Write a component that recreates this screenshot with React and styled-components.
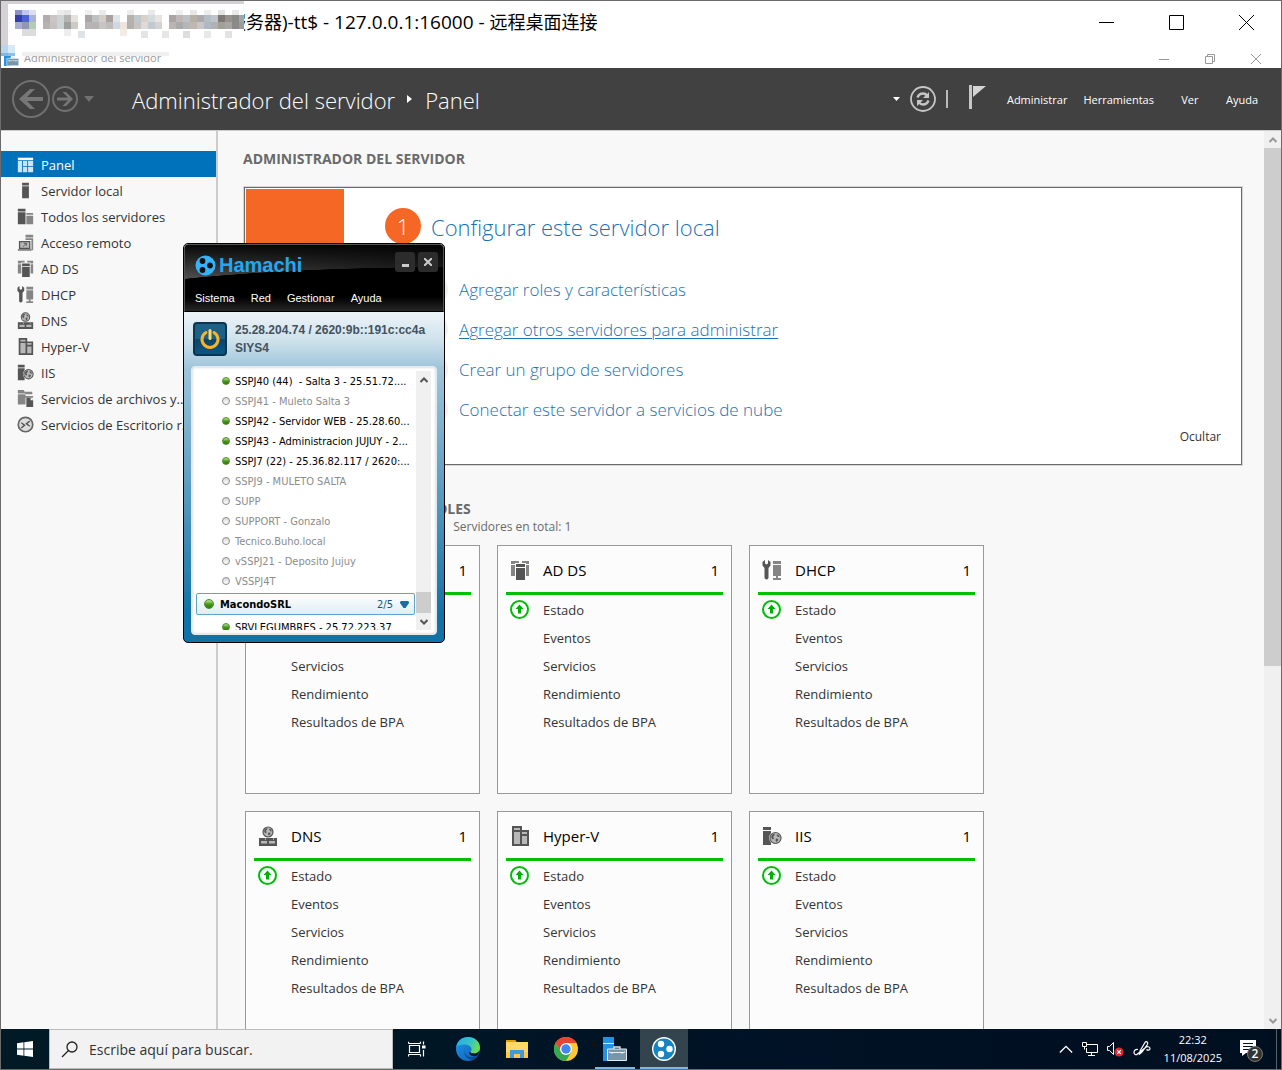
import React from 'react';
import styled, { createGlobalStyle, css } from 'styled-components';

const GlobalStyle = createGlobalStyle`
  *, *::before, *::after { box-sizing: border-box; }
  body { margin: 0; font-family: 'Open Sans', 'Noto Sans', sans-serif; font-size: 13px; color: #333; }
  button, input { font: inherit; color: inherit; margin: 0; }
  button { border: 0; background: none; padding: 0; }
  h1, h2, ul, p { margin: 0; padding: 0; font-weight: inherit; font-size: inherit; }
  li { list-style: none; }
  a { color: inherit; text-decoration: none; }
  svg { display: block; flex: none; }
`;

/* ---------- window frame ---------- */

const Desktop = styled.div`
  position: relative;
  display: flex;
  flex-direction: column;
  height: 100vh;
  border: 1px solid #6b6b6b;
  background: #fff;
  overflow: hidden;
`;

const TitleBar = styled.header`
  display: flex;
  align-items: center;
  flex: none;
  height: 44px;
  padding: 0 27px 2px 227px;
  color: #000;
`;

const WindowTitle = styled.h1`
  flex: 1;
  font-family: 'Open Sans', 'Noto Sans CJK SC', sans-serif;
  font-size: 18px;
  line-height: 24px;
  white-space: nowrap;
`;

const Address = styled.span`
  font-size: 19px;
`;

const Controls = styled.div`
  display: flex;
  gap: ${(p) => p.$gap}px;
`;

const SubTitleBar = styled.div`
  display: flex;
  justify-content: space-between;
  flex: none;
  height: 23px;
  padding: 5px 20px 0 3px;
  color: #999;
  font-size: 11px;
  line-height: 16px;
`;

const SubTitle = styled.div`
  display: flex;
  align-items: center;
  gap: 5px;
  height: 16px;
`;

const Veil = styled.svg`
  position: absolute;
  left: 0;
  top: 0;
`;

/* ---------- server manager header ---------- */

const Banner = styled.div`
  display: flex;
  align-items: center;
  flex: none;
  height: 63px;
  padding: 0 23px 0 11px;
  background: #414141;
  border-bottom: 1px solid #ccc;
  color: #fff;
`;

const Breadcrumb = styled.div`
  display: flex;
  align-items: center;
  gap: 12px;
  flex: 1;
  margin-left: 37px;
  padding-top: 2px;
  font-size: 22px;
  font-weight: 300;
  line-height: 32px;
  white-space: nowrap;
`;

const NavButtons = styled.div`
  display: flex;
  align-items: center;
  gap: 2px;
`;

const Tools = styled.div`
  display: flex;
  align-items: center;
  gap: 10px;
  margin-right: 21px;
`;

const Divider = styled.span`
  width: 2px;
  height: 18px;
  margin-right: 10px;
  background: #bbb;
`;

const MenuBar = styled.nav`
  display: flex;
  gap: 16px;
  padding-top: 2px;
  font-size: 11px;
  line-height: 20px;
`;

const MenuButton = styled.button`
  min-width: ${(p) => (p.$wide ? 40 : 0)}px;
`;

/* ---------- body ---------- */

const Body = styled.div`
  display: flex;
  flex: 1;
  min-height: 0;
  background: #f8f8f8;
`;

const Sidebar = styled.nav`
  flex: none;
  width: 217px;
  padding-top: 20px;
  border-right: 2px solid #ccc;
`;

const SideItem = styled.a`
  display: flex;
  align-items: center;
  gap: 7px;
  height: 26px;
  padding-left: 16px;
  overflow: hidden;
  font-size: 13px;
  white-space: nowrap;
  color: ${(p) => (p.$active ? '#fff' : '#333')};
  background: ${(p) => (p.$active ? '#0072bc' : 'transparent')};
`;

const SideLabel = styled.span`
  padding-top: 2px;
`;

const Main = styled.main`
  flex: 1;
  min-width: 0;
  padding: 18px 22px 0 25px;
  overflow: hidden;
`;

const Heading = styled.h2`
  font-size: 14px;
  font-weight: 700;
  line-height: 20px;
  color: #6a6a6a;
`;

const Welcome = styled.section`
  display: flex;
  height: 278px;
  margin: 18px 0 34px 1px;
  padding: 1px;
  background: #fff;
  border: 1px solid #6a6a6a;
  box-shadow: 0 0 0 1px #d6d6d6;
`;

const OrangeTile = styled.div`
  flex: none;
  width: 98px;
  height: 132px;
  background: #f56724;
`;

const Steps = styled.div`
  flex: 1;
  padding: 19px 19px 0 41px;
`;

const Step = styled.a`
  display: flex;
  align-items: center;
  gap: ${(p) => (p.$main ? 10 : 11)}px;
  height: ${(p) => (p.$main ? 36 : 40)}px;
  margin: ${(p) => (p.$main ? '0 0 25px' : '0 0 0 30px')};
  color: #1a72b5;
  font-size: ${(p) => (p.$main ? 22 : 17)}px;
  font-weight: 300;
  text-decoration: ${(p) => (p.$underline ? 'underline' : 'none')};
  text-underline-offset: 2px;
  text-decoration-thickness: 1px;
  white-space: nowrap;
`;

const StepText = styled.span`
  padding-top: ${(p) => (p.$main ? 2 : 0)}px;
`;

const StepNumber = styled.span`
  display: flex;
  align-items: center;
  justify-content: center;
  width: ${(p) => (p.$main ? 36 : 33)}px;
  height: ${(p) => (p.$main ? 36 : 33)}px;
  border-radius: 50%;
  color: ${(p) => (p.$main ? '#fff' : '#777')};
  background: ${(p) => (p.$main ? '#f56724' : '#f0f0f0')};
`;

const HideButton = styled.button`
  display: block;
  margin: -2px 0 0 auto;
  font-size: 12px;
  line-height: 20px;
`;

const Summary = styled.p`
  display: flex;
  gap: 17px;
  font-size: 12px;
  line-height: 16px;
  color: #6a6a6a;
  margin-bottom: 10px;
`;

const Tiles = styled.div`
  display: grid;
  grid-template-columns: repeat(3, 235px);
  gap: 17px;
  padding-left: 2px;
`;

const Tile = styled.section`
  height: 249px;
  padding: 0 8px;
  background: #fcfcfc;
  border: 1px solid #999;
`;

const TileHead = styled.header`
  display: flex;
  align-items: center;
  height: 49px;
  padding: 2px 4px 0 4px;
  border-bottom: 3px solid #00c000;
  font-size: 15px;
  line-height: 20px;
  color: #000;
`;

const TileName = styled.h2`
  flex: 1;
  margin-left: 13px;
`;

const TileRow = styled.li`
  display: flex;
  align-items: center;
  gap: 13px;
  height: 28px;
  padding-left: ${(p) => (p.$indent ? 37 : 4)}px;
`;

const TileRowText = styled.span`
  padding-top: 2px;
`;

const ScrollBar = styled.div`
  display: flex;
  flex-direction: column;
  flex: none;
  width: ${(p) => p.$w}px;
  background: #f0f0f0;
`;

const ScrollButton = styled.button`
  display: flex;
  align-items: center;
  justify-content: center;
  height: 17px;
  color: ${(p) => p.$tone};
`;

const Track = styled.div`
  display: flex;
  flex-direction: column;
  flex: 1;
  justify-content: ${(p) => (p.$end ? 'flex-end' : 'flex-start')};
`;

const Thumb = styled.div`
  height: ${(p) => p.$size};
  background: #cdcdcd;
`;

/* ---------- Hamachi window ---------- */

const Hamachi = styled.section`
  position: absolute;
  left: 182px;
  top: 242px;
  display: flex;
  flex-direction: column;
  width: 262px;
  height: 400px;
  overflow: hidden;
  border: 1px solid #000;
  border-radius: 5px;
  background: linear-gradient(#edf4f8 68px, #cfe2ec 96px, #9fc5db 124px, #1272a6 370px);
`;

const HamachiHead = styled.header`
  display: flex;
  flex-direction: column;
  justify-content: space-between;
  flex: none;
  height: 68px;
  padding: 3px 5px 4px 10px;
  border: 1px solid #555;
  border-bottom-color: #000;
  border-radius: 4px 4px 0 0;
  background: linear-gradient(transparent 52px, #2c2c2c 68px),
    radial-gradient(ellipse 400px 48px at 260px 70px, #000 99%, transparent 100%),
    linear-gradient(90deg, transparent, rgba(0, 0, 0, 0.6)),
    linear-gradient(#080808, #5c5c5c 40px);
`;

const BrandRow = styled.div`
  display: flex;
  align-items: center;
  gap: 3px;
`;

const Brand = styled.h2`
  display: flex;
  align-items: center;
  gap: 3px;
  flex: 1;
  padding-top: 6px;
  font-family: 'Liberation Sans', Arial, sans-serif;
  font-size: 20px;
  font-weight: 700;
  line-height: 22px;
  color: #22a7f0;
`;

const DarkButton = styled.button`
  display: flex;
  align-items: center;
  justify-content: center;
  width: 20px;
  height: 20px;
  border-radius: 3px;
  background: #2c2c2c;
  color: #ccc;
`;

const HamachiMenu = styled.nav`
  display: flex;
  gap: 16px;
  font-family: 'Liberation Sans', Arial, sans-serif;
  font-size: 11px;
  line-height: 18px;
  color: #fff;
`;

const Identity = styled.div`
  display: flex;
  align-items: center;
  gap: 8px;
  flex: none;
  height: 54px;
  padding-left: 9px;
  font-family: 'Liberation Sans', Arial, sans-serif;
  font-size: 12px;
  font-weight: 700;
  line-height: 18px;
  color: #44525e;
`;

const PowerButton = styled.button`
  display: flex;
  align-items: center;
  justify-content: center;
  width: 34px;
  height: 34px;
  border: 2px solid #0b3550;
  border-radius: 4px;
  background: linear-gradient(#1c6088 50%, #0b4468 50%, #0d5580);
`;

const Panel = styled.div`
  display: flex;
  flex: 1;
  min-height: 0;
  margin: 0 7px 7px;
  padding: 4px 5px 4px 4px;
  border: 1px solid #e2eaf0;
  border-radius: 4px;
  background: #fff;
  box-shadow: inset 0 0 3px #b8c4cc;
`;

const PeerList = styled.ul`
  flex: 1;
  min-width: 0;
  overflow: hidden;
  padding-right: 1px;
  font-family: 'DejaVu Sans Condensed', 'DejaVu Sans', sans-serif;
  font-stretch: condensed;
  font-size: 11px;
`;

const Peer = styled.li`
  display: flex;
  align-items: center;
  gap: 5px;
  height: 20px;
  padding-left: 26px;
  color: ${(p) => (p.$on ? '#000' : '#8c8c8c')};
`;

const PeerName = styled.span`
  white-space: pre;
`;

const Dot = styled.span`
  flex: none;
  width: ${(p) => p.$d}px;
  height: ${(p) => p.$d}px;
  border-radius: 50%;
  border: 1px solid #8a8a8a;
  background: linear-gradient(#d8d8d8, #fff);
  ${(p) =>
    p.$on &&
    css`
      border-color: #4b8a2a;
      background: linear-gradient(#a5d67d 15%, #4a9a1c 50%, #2f7a0c);
    `}
`;

const Network = styled.li`
  display: flex;
  align-items: center;
  height: 22px;
  margin: 2px 0;
  padding: 0 5px 0 7px;
  border: 1px solid #5fa3c8;
  border-radius: 2px;
  background: linear-gradient(#fff, #e0edf5);
  color: #14567d;
`;

const NetworkName = styled.strong`
  flex: 1;
  margin-left: 6px;
  color: #000;
`;

const NetworkCount = styled.span`
  margin-right: 7px;
`;

/* ---------- taskbar ---------- */

const Taskbar = styled.footer`
  display: flex;
  flex: none;
  height: 40px;
  background: linear-gradient(90deg, #001b25, #001225 60%, #000f20);
  color: #fff;
`;

const TaskButton = styled.button`
  display: flex;
  align-items: center;
  justify-content: center;
  width: 48px;
  height: 40px;
  background: ${(p) => (p.$active ? '#33444f' : 'transparent')};
  box-shadow: ${(p) => (p.$active ? 'inset 0 -2px #76b9ed' : 'none')};
`;

const OpenMark = styled.span`
  display: flex;
  align-items: center;
  justify-content: center;
  width: 40px;
  height: 40px;
  box-shadow: inset 0 -2px #76b9ed;
`;

const Pinned = styled.div`
  display: flex;
  gap: 1px;
  flex: 1;
  padding-left: 3px;
`;

const SearchBox = styled.label`
  display: flex;
  align-items: center;
  gap: 11px;
  width: 344px;
  padding-left: 11px;
  background: #f2f2f2;
  border: 1px solid #bbb;
  color: #222;
`;

const SearchInput = styled.input`
  flex: 1;
  min-width: 0;
  padding: 0;
  border: 0;
  outline: 0;
  background: transparent;
  font-size: 14px;
  &::placeholder { color: #333; opacity: 1; }
`;

const Tray = styled.div`
  display: flex;
  align-items: center;
  gap: 9px;
  padding-right: 4px;
`;

const Clock = styled.time`
  margin: 0 8px 0 4px;
  font-size: 11px;
  line-height: 18px;
  text-align: center;
`;

const ShowDesktop = styled.button`
  width: 1px;
  height: 40px;
  margin-left: 3px;
  background: #56616b;
`;

/* ---------- icons ---------- */

const D = '#555';
const M = '#858585';
const L = '#b8b8b8';

const Globe = ({ x, y, r }) => (
  <g>
    <circle cx={x} cy={y} r={r} fill={L} stroke={D} strokeWidth="1.2" />
    <path
      transform={`translate(${x} ${y}) scale(${r / 5})`}
      d="M-4-1L-2.500-3.500L-.5-4L-1-2.200L-2.200-1.200L-1.400 0L-2 1.400L-3 1ZM1-3.400L3-2.600L3.800-.4L2.600-.8L1.400-1.600ZM.4.400L2.600.8L2 2.800L.6 3.600L0 2Z"
      fill={D}
    />
  </g>
);

const shapes = {
  panel: (
    <>
      <path d="M1 2h18v3H1z" fill="#fff" />
      <path d="M1 6h5v13H1zM7 6h5v6H7zM13 6h6v6h-6zM7 13h5v6H7zM13 13h6v6h-6z" fill="#cde4f3" />
    </>
  ),
  local: <path d="M6 1h8v3H6zM6 5h8v14H6z" fill={D} />,
  all: (
    <>
      <path d="M1 1h9v3H1zM1 5h9v14H1z" fill={D} />
      <path d="M11 6h8v2h-8zM11 9h8v10h-8z" fill={M} />
    </>
  ),
  remote: (
    <>
      <path d="M10 1h9v3h-9zM10 5h9v14h-2V7h-7z" fill={M} />
      <path d="M3 9h12v8H3z" fill={L} stroke={D} strokeWidth="1.5" />
      <path d="M1 18h16v1.500H1z" fill={D} />
      <path d="M7 15l4-4M8 11h3v3" fill="none" stroke={D} />
    </>
  ),
  adds: (
    <>
      <path d="M1 1h8v2H5v1H1zM1 5h4v11H1zM12 1h7v3h-3V3h-4zM16 5h3v11h-3z" fill={M} />
      <path d="M6 4h9v3H6zM6 8h9v12H6z" fill={D} />
    </>
  ),
  dhcp: (
    <>
      <path
        d="M3 0v3.500l1.500 1 1.500-1V0l2.500 2v3.500L6.500 8v10q-2 3-4 0V8L.5 5.500V2z"
        fill={D}
      />
      <path d="M11 1h8v3h-8zM11 5h8v11h-8zM14 16h2v2h3v2h-8v-2h3z" fill={M} />
    </>
  ),
  dns: (
    <>
      <Globe x={10} y={6} r={5} />
      <path d="M1 12h18v8H1z" fill={D} />
      <path d="M3 15h6v2.500H3zM11 15h6v2.500h-6z" fill={L} />
      <path d="M7 12.500h1v1H7zM15 12.500h1v1h-1z" fill="#fff" />
    </>
  ),
  hyperv: (
    <>
      <path d="M2 0h10v4h7v16H2z" fill={D} />
      <path d="M4 2h6v2H4zM4 6h6v12H4zM12 6h5v2h-5zM12 10h5v8h-5z" fill={L} />
    </>
  ),
  iis: (
    <>
      <path d="M1 1h8v3H1zM1 5h8v14H1z" fill={D} />
      <circle cx="13.500" cy="12" r="6.500" fill="#f8f8f8" />
      <Globe x={13.5} y={12} r={5.5} />
    </>
  ),
  files: (
    <>
      <path d="M1 0h7l1 2h9v3h-8v-1H1zM1 5h9v2h9v2h-9v8H1z" fill={M} />
      <path d="M11 9h5l3 3v8h-8z" fill={D} />
      <path d="M16 9v3h3z" fill="#fff" />
    </>
  ),
  rds: (
    <>
      <circle cx="10" cy="10" r="8.500" fill="#ddd" stroke="#666" strokeWidth="2" />
      <path d="M5 8l4 3-4 3M15 6l-4 3 4 3" fill="none" stroke={D} strokeWidth="1.600" />
    </>
  ),
};

const RoleIcon = ({ name, size }) => (
  <svg width={size} height={size} viewBox="0 0 20 20" aria-hidden="true">
    {shapes[name]}
  </svg>
);

const Chevron = ({ down, w = 8, stroke = 2 }) => (
  <svg width={w} height={w} viewBox="0 0 8 8" aria-hidden="true">
    <path
      d={down ? 'M0.500 2l3.500 3.500L7.500 2' : 'M0.500 6L4 2.500L7.500 6'}
      fill="none"
      stroke="currentColor"
      strokeWidth={stroke}
    />
  </svg>
);

const StatusUp = () => (
  <svg width="20" height="20" viewBox="0 0 20 20" aria-hidden="true">
    <circle cx="9.500" cy="10.500" r="8.500" fill="#fff" stroke="#00bd0a" strokeWidth="2" />
    <path d="M9.500 5.500l4 4.500h-2.500v4.500h-3V10H5.500z" fill="#00b000" />
  </svg>
);

const Minimise = ({ size }) => (
  <svg width={size} height={size} aria-hidden="true">
    <path d={`M0 ${Math.floor(size / 2) + 0.5}h${size}`} stroke="currentColor" />
  </svg>
);

const Maximise = () => (
  <svg width="15" height="15" aria-hidden="true">
    <path d="M.5.5h14v14H.5z" fill="none" stroke="currentColor" />
  </svg>
);

const Restore = () => (
  <svg width="10" height="10" aria-hidden="true">
    <path d="M.5 2.500h7v7h-7zM2.500 2.500v-2h7v7h-2" fill="none" stroke="currentColor" />
  </svg>
);

const Close = ({ size, w = 1 }) => (
  <svg width={size} height={size} aria-hidden="true">
    <path d={`M0 0L${size} ${size}M${size} 0L0 ${size}`} stroke="currentColor" strokeWidth={w} />
  </svg>
);

const ServerCase = ({ size }) => (
  <svg width={size} height={size} viewBox="0 0 24 24" aria-hidden="true">
    <path d="M0 0h11v24H0z" fill="#2492e0" />
    <path d="M0 6.500h11" stroke="#cfe8fa" />
    <path d="M11 12v-2h6v2" fill="none" stroke="#dfe8ed" strokeWidth="1.300" />
    <path d="M4.500 12h19v11.500h-19z" fill="#7896a8" stroke="#e3edf2" />
    <path d="M6.500 14.500v1h15v-1M9 15v2M19 15v2" fill="none" stroke="#e3edf2" />
  </svg>
);

const Back = () => (
  <svg width="38" height="38" viewBox="0 0 38 38" aria-hidden="true">
    <circle cx="19" cy="19" r="18" fill="none" stroke="#707070" strokeWidth="2" />
    <path d="M7 19L18 9h5l-8 8h16v4H15l8 8h-5z" fill="#777" />
  </svg>
);

const Forward = () => (
  <svg width="26" height="26" viewBox="0 0 26 26" aria-hidden="true">
    <circle cx="13" cy="13" r="12" fill="none" stroke="#707070" strokeWidth="2" />
    <path d="M21 13l-7 7h-3.500l5.500-5.500H5v-3h11L10.500 6H14z" fill="#777" />
  </svg>
);

const Caret = ({ w, h, color }) => (
  <svg width={w} height={h} viewBox="0 0 10 6" preserveAspectRatio="none" aria-hidden="true">
    <path d="M0 0h10L5 6z" fill={color} />
  </svg>
);

const NetworkCaret = () => (
  <svg width="9" height="7" viewBox="0 0 9 7" aria-hidden="true">
    <path d="M1 0h7l1 1v1L5.500 7h-2L0 2V1z" fill="#1a6d9e" />
  </svg>
);

const Refresh = () => (
  <svg width="26" height="26" viewBox="0 0 26 26" aria-hidden="true">
    <circle cx="13" cy="13" r="12" fill="none" stroke="#c6c6c6" strokeWidth="1.800" />
    <path d="M7.500 11.500q1.500-4 5.500-4 2.500 0 4 2M18.500 14.500q-1.500 4-5.500 4-2.500 0-4-2" fill="none" stroke="#c6c6c6" strokeWidth="2.400" />
    <path d="M19 6v6h-6zM7 20v-6h6z" fill="#c6c6c6" />
  </svg>
);

const Flag = () => (
  <svg width="18" height="28" viewBox="0 0 18 28" aria-hidden="true">
    <path d="M1 0h3v24H1z" fill="#c6c6c6" />
    <path d="M5 1h13L5 12z" fill="#d4d4d4" />
  </svg>
);

const HamachiMark = () => (
  <svg width="21" height="21" viewBox="0 0 21 21" aria-hidden="true">
    <circle cx="10.500" cy="10.500" r="10" fill="#35b3fa" />
    <g fill="#111">
      <circle cx="7.500" cy="6" r="2.900" />
      <circle cx="15" cy="10.500" r="2.900" />
      <circle cx="7.500" cy="15" r="2.900" />
    </g>
  </svg>
);

const Power = () => (
  <svg width="22" height="22" viewBox="0 0 22 22" aria-hidden="true">
    <path d="M7 4.500a8 8 0 1 0 8 0" fill="none" stroke="#f5b42a" strokeWidth="3" strokeLinecap="round" />
    <path d="M11 2.500v8" stroke="#ffd765" strokeWidth="3" strokeLinecap="round" />
  </svg>
);

const WindowsLogo = () => (
  <svg width="16" height="16" viewBox="0 0 16 16" aria-hidden="true">
    <path d="M0 2.200L6.500 1.300V7.600H0zM7.300 1.200L16 0V7.600H7.300zM0 8.400H6.500V14.700L0 13.800zM7.300 8.400H16V16L7.300 14.800z" fill="#fff" />
  </svg>
);

const Magnifier = () => (
  <svg width="17" height="17" viewBox="0 0 17 17" aria-hidden="true">
    <circle cx="11" cy="6" r="5" fill="none" stroke="#222" strokeWidth="1.300" />
    <path d="M7.500 9.500L1 16" stroke="#222" strokeWidth="1.300" />
  </svg>
);

const TaskView = () => (
  <svg width="18" height="16" viewBox="0 0 18 16" aria-hidden="true">
    <path d="M1.500 4.500h10v7h-10zM.5 2.500V.8M.5 2.500h12M12.500 2.500V.8M.5 13.500h12M.5 13.500v2M12.500 13.500v2M15.500.5v3M15.500 9v6.500" fill="none" stroke="#fff" strokeWidth="1.200" />
    <path d="M14 4.500h3.500v3H14z" fill="#fff" />
  </svg>
);

const Edge = () => (
  <svg width="24" height="24" viewBox="0 0 24 24" aria-hidden="true">
    <defs>
      <linearGradient id="edgeTop" x1="0" y1="0" x2="1" y2="0.400">
        <stop offset="0" stopColor="#28a8ea" />
        <stop offset="0.600" stopColor="#35c1c8" />
        <stop offset="1" stopColor="#66dc5a" />
      </linearGradient>
      <linearGradient id="edgeLow" x1="0" y1="0" x2="1" y2="1">
        <stop offset="0" stopColor="#2196e8" />
        <stop offset="1" stopColor="#0b5cb8" />
      </linearGradient>
    </defs>
    <circle cx="12" cy="12" r="12" fill="url(#edgeLow)" />
    <path d="M0.300 10C1 4 6 0 12 0c7 0 12 5 12 10.500 0 4-3 6-6 6-2.500 0-4-1-3.500-2 2-2 1-5.500-3-6.500-5-1-9 0-11.200 2z" fill="url(#edgeTop)" />
    <path d="M9 10c-2 4 0 9 5 10 3 .5 6-.5 8-2-1 2-2.500 3.500-4.500 4.800C11 23 6 17 9 10z" fill="#114a8b" />
    <path d="M14.500 14.500c-.5 1 1 2 3.500 2 2 0 4-.8 5.400-2.800-.2 1.600-.7 3-1.400 4.300-2 1.500-5 1.500-7 .5-2-1.200-2.300-3.500-.5-4z" fill="#001a26" />
  </svg>
);

const Explorer = () => (
  <svg width="22" height="18" viewBox="0 0 22 18" aria-hidden="true">
    <path d="M0 0h9l1.500 2H22v16H0z" fill="#ffd869" />
    <path d="M0 0h9l1.500 2H0z" fill="#dfa000" />
    <path d="M0 12h22v6H0z" fill="#fbc94c" />
    <path d="M4 18v-8h14v8h-4v-4H8v4z" fill="#3c9be0" />
  </svg>
);

const Chrome = () => (
  <svg width="24" height="24" viewBox="0 0 24 24" aria-hidden="true">
    <circle cx="12" cy="12" r="12" fill="#fcc934" />
    <path d="M1.600 6A12 12 0 0 1 22.400 6H12L6.800 15z" fill="#ea4335" />
    <path d="M1.600 6A12 12 0 0 0 12 24L17.200 15H6.800z" fill="#34a853" />
    <circle cx="12" cy="12" r="6" fill="#fff" />
    <circle cx="12" cy="12" r="4.700" fill="#4285f4" />
  </svg>
);

const HamachiTask = () => (
  <svg width="24" height="24" viewBox="0 0 24 24" aria-hidden="true">
    <circle cx="12" cy="12" r="11.300" fill="#1583c4" stroke="#fff" strokeWidth="1.400" />
    <g fill="#fff">
      <circle cx="9" cy="7" r="3.200" />
      <circle cx="17.500" cy="12" r="3.200" />
      <circle cx="9" cy="17" r="3.200" />
    </g>
  </svg>
);

const NetworkTray = () => (
  <svg width="16" height="15" viewBox="0 0 16 15" fill="none" stroke="#fff" aria-hidden="true">
    <path d="M5 2.500h10.500v8H4.500V6M9.500 10.500v3M6 13.500h7M.5.500h4v4h-4zM2.500 4.500v3" />
  </svg>
);

const SoundTray = () => (
  <svg width="17" height="16" viewBox="0 0 17 16" aria-hidden="true">
    <path d="M.5 5.500h2l4-4v12l-4-4h-2z" fill="none" stroke="#fff" />
    <circle cx="12" cy="11" r="4.500" fill="#e0252b" />
    <path d="M10.200 9.200l3.600 3.600M13.800 9.200l-3.600 3.600" stroke="#fff" strokeWidth="1.200" />
  </svg>
);

const PenTray = () => (
  <svg width="18" height="18" viewBox="0 0 18 18" fill="none" stroke="#fff" strokeWidth="1.200" aria-hidden="true">
    <path d="M6.500 14L7 11L12 2.500q1-1.500 2.200-.5 1 1 .2 2.500L9 12zM5 9.500c-2.500-.5-4 1-4 3s2 3 3.500 1.500L12 8c2-2 5-1.500 5 .5s-2.500 2-3.500 1" />
  </svg>
);

const Notifications = () => (
  <svg width="25" height="25" viewBox="0 0 25 25" aria-hidden="true">
    <path d="M1 3h16v13H7l-4 3v-3H1z" fill="#fff" />
    <path d="M4 6.500h10M4 9.500h10M4 12.500h6" stroke="#001225" />
    <circle cx="16" cy="17" r="7.500" fill="#333" stroke="#777" />
    <text x="16" y="21" fill="#fff" fontSize="12" fontWeight="600" textAnchor="middle">2</text>
  </svg>
);

/* ---------- data ---------- */

const mosaic = [
  [15, 10, '#8c90ca'], [22, 10, '#c0c6f0'], [29, 10, '#dcdcf4'], [15, 15, '#343cae'], [22, 15, '#4c62da'], [29, 15, '#aab0de'],
  [15, 22, '#aaaad6'], [22, 22, '#9494b4'], [29, 22, '#b4ccb2'], [22, 29, '#dcdcda'], [29, 29, '#dcdcdc'],
  [43, 15, '#b4acac'], [50, 15, '#cac6c6'], [57, 15, '#cdd2d4'], [64, 15, '#b4b4b4'], [71, 15, '#e6e2de'],
  [43, 22, '#b6b2b2'], [50, 22, '#c6c2c2'], [57, 22, '#ccd4d6'], [64, 22, '#9ca09e'], [71, 22, '#cecbc6'],
  [85, 15, '#aaa4a6'], [92, 15, '#bcc1c4'], [99, 15, '#d2cdc6'], [106, 15, '#aaa09e'], [113, 15, '#e0e4ea'],
  [85, 22, '#b9b4b4'], [92, 22, '#b7b3b3'], [99, 22, '#c6c5c5'], [106, 22, '#bfbbbb'], [113, 22, '#cfd8e4'], [120, 22, '#efe4dc'],
  [127, 15, '#b7b1ae'], [134, 15, '#c0c8cb'], [141, 15, '#d7d1c8'], [148, 15, '#d3dbe1'], [155, 15, '#e8e5de'],
  [127, 22, '#b5b0b0'], [134, 22, '#c7c4c3'], [141, 22, '#dddbd9'], [148, 22, '#c3c9cf'], [155, 22, '#d5d3d1'],
  [169, 15, '#aaa5a4'], [176, 15, '#bdb7b7'], [183, 15, '#bcc2c7'], [190, 15, '#b8afa7'], [197, 15, '#aaa9ac'], [204, 15, '#b4bcc4'], [211, 15, '#c0c5cc'],
  [169, 22, '#bab4b2'], [176, 22, '#aaa'], [183, 22, '#b4b7ba'], [190, 22, '#c0b7b2'], [197, 22, '#c9c6c5'], [204, 22, '#aeb9c3'], [211, 22, '#b1b1b1'],
  [218, 15, '#7d7a75'], [225, 15, '#96938c'], [232, 15, '#8a8986'], [239, 15, '#a5a5a2'],
  [218, 22, '#a29e98'], [225, 22, '#a8a6a3'], [232, 22, '#8a8a88'], [239, 22, '#9b9b99'],
  [57, 10, '#ebebeb'], [64, 10, '#e4e4e4'], [85, 10, '#eee'], [99, 10, '#e9e9e9'], [127, 10, '#ececec'], [148, 10, '#e9e9e9'], [176, 10, '#eee'],
  [190, 10, '#e6e6e6'], [204, 10, '#ececec'], [218, 10, '#e4e4e4'], [232, 10, '#e8e8e8'], [64, 29, '#ededed'], [78, 31, '#dfe3e6'],
  [120, 29, '#f2ece7'], [141, 31, '#e4e4e4'], [162, 31, '#e6e6e6'], [183, 31, '#ddd'], [204, 31, '#e8e8e8'], [225, 31, '#e2e2e2'],
];

const navItems = [
  ['panel', 'Panel'],
  ['local', 'Servidor local'],
  ['all', 'Todos los servidores'],
  ['remote', 'Acceso remoto'],
  ['adds', 'AD DS'],
  ['dhcp', 'DHCP'],
  ['dns', 'DNS'],
  ['hyperv', 'Hyper-V'],
  ['iis', 'IIS'],
  ['files', 'Servicios de archivos y...'],
  ['rds', 'Servicios de Escritorio r...'],
];

const tiles = [
  ['remote', 'Acceso remoto'],
  ['adds', 'AD DS'],
  ['dhcp', 'DHCP'],
  ['dns', 'DNS'],
  ['hyperv', 'Hyper-V'],
  ['iis', 'IIS'],
];

const steps = [
  'Agregar roles y características',
  'Agregar otros servidores para administrar',
  'Crear un grupo de servidores',
  'Conectar este servidor a servicios de nube',
];

const peers = [
  ['SSPJ40 (44)  - Salta 3 - 25.51.72....', true],
  ['SSPJ41 - Muleto Salta 3', false],
  ['SSPJ42 - Servidor WEB - 25.28.60...', true],
  ['SSPJ43 - Administracion JUJUY - 2...', true],
  ['SSPJ7 (22) - 25.36.82.117 / 2620:...', true],
  ['SSPJ9 - MULETO SALTA', false],
  ['SUPP', false],
  ['SUPPORT - Gonzalo', false],
  ['Tecnico.Buho.local', false],
  ['vSSPJ21 - Deposito Jujuy', false],
  ['VSSPJ4T', false],
];

/* ---------- parts ---------- */

const RoleTile = ({ icon, name }) => (
  <Tile>
    <TileHead>
      <RoleIcon name={icon} size={20} />
      <TileName>{name}</TileName>
      <span>1</span>
    </TileHead>
    <ul>
      <TileRow>
        <StatusUp />
        <TileRowText>Estado</TileRowText>
      </TileRow>
      {['Eventos', 'Servicios', 'Rendimiento', 'Resultados de BPA'].map((t) => (
        <TileRow key={t} $indent>
          <TileRowText>{t}</TileRowText>
        </TileRow>
      ))}
    </ul>
  </Tile>
);

const HamachiWindow = () => (
  <Hamachi aria-label="Hamachi">
    <HamachiHead>
      <BrandRow>
        <Brand>
          <HamachiMark />
          Hamachi
        </Brand>
        <DarkButton aria-label="Minimizar">
          <svg width="7" height="10" aria-hidden="true">
            <path d="M0 8.500h7" stroke="#ccc" strokeWidth="3" />
          </svg>
        </DarkButton>
        <DarkButton aria-label="Cerrar">
          <Close size={8} w={2} />
        </DarkButton>
      </BrandRow>
      <HamachiMenu>
        {['Sistema', 'Red', 'Gestionar', 'Ayuda'].map((m) => (
          <button key={m}>{m}</button>
        ))}
      </HamachiMenu>
    </HamachiHead>
    <Identity>
      <PowerButton aria-label="Encender">
        <Power />
      </PowerButton>
      <div>
        25.28.204.74 / 2620:9b::191c:cc4a
        <br />
        SIYS4
      </div>
    </Identity>
    <Panel>
      <PeerList>
        {peers.map(([name, on]) => (
          <Peer key={name} $on={on}>
            <Dot $d={8} $on={on} />
            <PeerName>{name}</PeerName>
          </Peer>
        ))}
        <Network>
          <Dot $d={10} $on />
          <NetworkName>MacondoSRL</NetworkName>
          <NetworkCount>2/5</NetworkCount>
          <NetworkCaret />
        </Network>
        <Peer $on>
          <Dot $d={8} $on />
          <PeerName>SRVLEGUMBRES - 25.72.223.37</PeerName>
        </Peer>
      </PeerList>
      <ScrollBar $w={15}>
        <ScrollButton aria-label="Subir" $tone="#555">
          <Chevron />
        </ScrollButton>
        <Track $end>
          <Thumb $size="21px" />
        </Track>
        <ScrollButton aria-label="Bajar" $tone="#555">
          <Chevron down />
        </ScrollButton>
      </ScrollBar>
    </Panel>
  </Hamachi>
);

export default function App() {
  return (
    <>
      <GlobalStyle />
      <Desktop>
        <TitleBar>
          <WindowTitle>
            服务器<Address>)-tt$ - 127.0.0.1:16000 - </Address>远程桌面连接
          </WindowTitle>
          <Controls $gap={55}>
            <button aria-label="Minimizar"><Minimise size={15} /></button>
            <button aria-label="Maximizar"><Maximise /></button>
            <button aria-label="Cerrar"><Close size={15} /></button>
          </Controls>
        </TitleBar>
        <SubTitleBar>
          <SubTitle>
            <ServerCase size={15} />
            Administrador del servidor
          </SubTitle>
          <Controls $gap={36}>
            <button aria-label="Minimizar ventana"><Minimise size={10} /></button>
            <button aria-label="Restaurar ventana"><Restore /></button>
            <button aria-label="Cerrar ventana"><Close size={10} /></button>
          </Controls>
        </SubTitleBar>
        <Veil width="243" height="55" viewBox="1 1 243 55" aria-hidden="true">
          <path d="M0 0h244v57H0z" fill="#fff" />
          <path d="M0 0h244v4H8v45H0z" fill="#d4d2d4" />
          <path d="M1 45h7v8H1z" fill="#b9d6ea" />
          <path d="M8 45h7v8H8z" fill="#d5e9f7" />
          <path d="M1 53h7v5H1z" fill="#7fb9e0" />
          <path d="M8 53h7v5H8z" fill="#8cc0e4" />
          <path d="M22 52h147v4H22z" fill="#f0f0f0" />
          {mosaic.map(([x, y, c]) => (
            <rect key={`${x}-${y}`} x={x} y={y} width="7" height={y === 10 ? 5 : 7} fill={c} />
          ))}
        </Veil>

        <Banner>
          <NavButtons>
            <button aria-label="Atrás"><Back /></button>
            <button aria-label="Adelante"><Forward /></button>
          </NavButtons>
          <button aria-label="Historial">
            <svg width="17" height="6" viewBox="0 0 17 6" aria-hidden="true">
              <path d="M6 0h10l-5 6z" fill="#707070" />
            </svg>
          </button>
          <Breadcrumb>
            <span>Administrador del servidor</span>
            <svg width="6" height="10" viewBox="0 0 6 10" aria-hidden="true">
              <path d="M0 0l5 4-5 4z" fill="#fff" />
            </svg>
            <span>Panel</span>
          </Breadcrumb>
          <Tools>
            <Caret w={7} h={4} color="#fff" />
            <button aria-label="Actualizar"><Refresh /></button>
            <Divider />
            <button aria-label="Notificaciones"><Flag /></button>
          </Tools>
          <MenuBar>
            <MenuButton>Administrar</MenuButton>
            <MenuButton>Herramientas</MenuButton>
            <MenuButton $wide>Ver</MenuButton>
            <MenuButton>Ayuda</MenuButton>
          </MenuBar>
        </Banner>

        <Body>
          <Sidebar>
            {navItems.map(([icon, label], i) => (
              <SideItem key={icon} href="#" $active={i === 0}>
                <RoleIcon name={icon} size={17} />
                <SideLabel>{label}</SideLabel>
              </SideItem>
            ))}
          </Sidebar>
          <Main>
            <Heading>ADMINISTRADOR DEL SERVIDOR</Heading>
            <Welcome>
              <OrangeTile />
              <Steps>
                <Step href="#" $main>
                  <StepNumber $main>1</StepNumber>
                  <StepText $main>Configurar este servidor local</StepText>
                </Step>
                {steps.map((s, i) => (
                  <Step key={s} href="#" $underline={i === 1}>
                    <StepNumber>{i + 2}</StepNumber>
                    <StepText>{s}</StepText>
                  </Step>
                ))}
                <HideButton>Ocultar</HideButton>
              </Steps>
            </Welcome>
            <Heading>GRUPOS DE SERVIDORES Y ROLES</Heading>
            <Summary>
              <span>Roles: 6</span>
              <span>Grupos de servidores: 1</span>
              <span>Servidores en total: 1</span>
            </Summary>
            <Tiles>
              {tiles.map(([icon, name]) => (
                <RoleTile key={icon} icon={icon} name={name} />
              ))}
            </Tiles>
          </Main>
          <ScrollBar $w={17}>
            <ScrollButton aria-label="Subir página" $tone="#999">
              <Chevron />
            </ScrollButton>
            <Track>
              <Thumb $size="60%" />
            </Track>
            <ScrollButton aria-label="Bajar página" $tone="#999">
              <Chevron down />
            </ScrollButton>
          </ScrollBar>
        </Body>

        <Taskbar>
          <TaskButton aria-label="Inicio"><WindowsLogo /></TaskButton>
          <SearchBox>
            <Magnifier />
            <SearchInput aria-label="Buscar" placeholder="Escribe aquí para buscar." />
          </SearchBox>
          <TaskButton aria-label="Vista de tareas"><TaskView /></TaskButton>
          <Pinned>
            <TaskButton aria-label="Edge"><Edge /></TaskButton>
            <TaskButton aria-label="Explorador"><Explorer /></TaskButton>
            <TaskButton aria-label="Chrome"><Chrome /></TaskButton>
            <TaskButton aria-label="Administrador del servidor">
              <OpenMark><ServerCase size={24} /></OpenMark>
            </TaskButton>
            <TaskButton aria-label="Hamachi" $active><HamachiTask /></TaskButton>
          </Pinned>
          <Tray>
            <button aria-label="Iconos ocultos"><Chevron w={14} stroke={0.8} /></button>
            <NetworkTray />
            <SoundTray />
            <PenTray />
            <Clock>
              22:32
              <br />
              11/08/2025
            </Clock>
            <Notifications />
            <ShowDesktop aria-label="Mostrar escritorio" />
          </Tray>
        </Taskbar>

        <HamachiWindow />
      </Desktop>
    </>
  );
}
